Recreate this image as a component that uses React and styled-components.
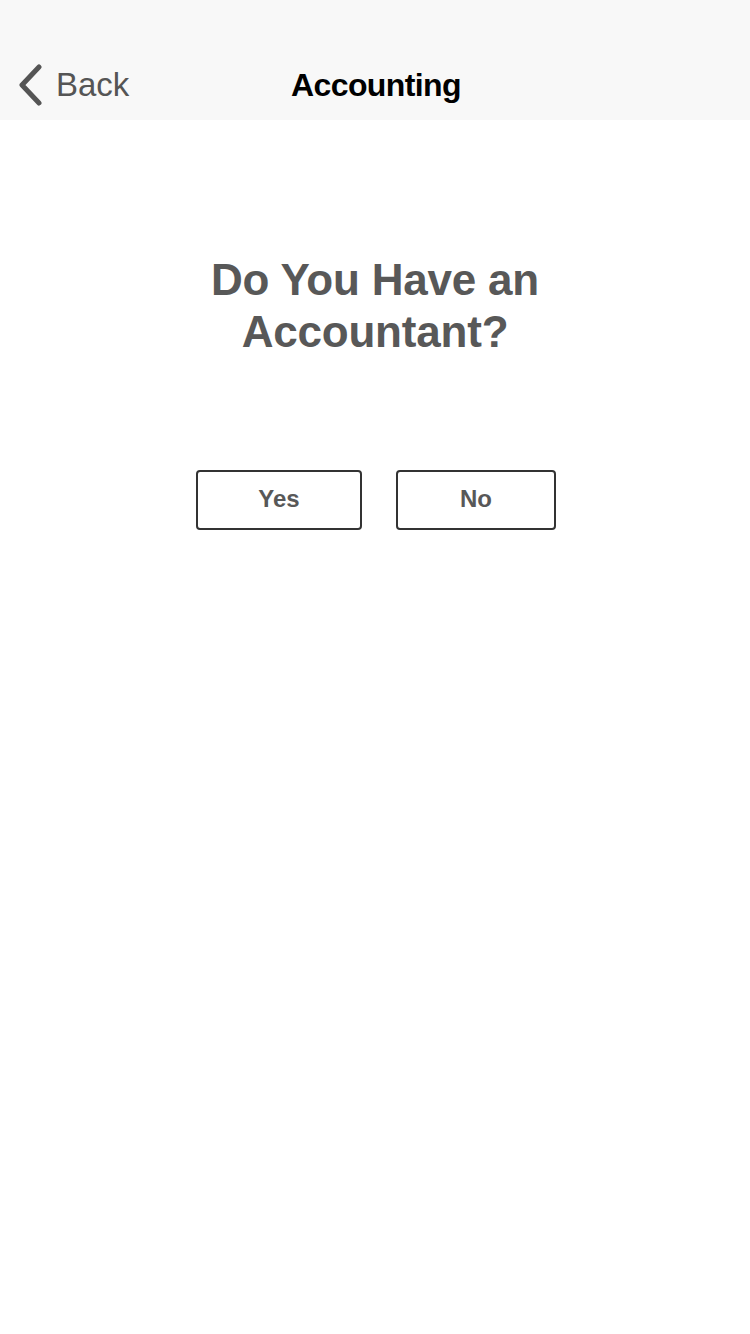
import styled, { createGlobalStyle } from "styled-components";

const GlobalStyle = createGlobalStyle`
    html, body {
        margin: 0;
        padding: 0;
        background: #ffffff;
        font-family: "Liberation Sans", Arial, sans-serif;
    }
`;

export default function App() {
    return (
        <Page>
            <GlobalStyle />
            <Header>
                <BackButton>
                    <svg width="28" height="42" viewBox="0 0 28 42">
                        <polyline points="23,3 6,21 23,39" fill="none" stroke="#555" strokeWidth="5" strokeLinecap="round" strokeLinejoin="round" />
                    </svg>
                    <span>Back</span>
                </BackButton>
                <Title>Accounting</Title>
            </Header>
            <Content>
                <Question>Do You Have an<br />Accountant?</Question>
                <Choices>
                    <Choice $width={166}>Yes</Choice>
                    <Choice $width={160}>No</Choice>
                </Choices>
            </Content>
        </Page>
    );
}

const Page = styled.div`
    width: 750px;
    min-height: 1334px;
    background: #fff;
`;

const Header = styled.div`
    position: relative;
    height: 70px;
    padding-top: 50px;
    background: #f8f8f8;
    display: flex;
    align-items: center;
    justify-content: center;
`;

const BackButton = styled.div`
    position: absolute;
    left: 16px;
    top: 50px;
    height: 70px;
    display: flex;
    align-items: center;
    gap: 12px;
    color: #555;
    font-size: 33px;
`;

const Title = styled.div`
    font-size: 32px;
    font-weight: bold;
    color: #000;
    letter-spacing: -0.6px;
    padding-left: 2px;
`;

const Content = styled.div`
    display: flex;
    flex-direction: column;
    align-items: center;
    padding-top: 134px;
`;

const Question = styled.h1`
    margin: 0;
    font-size: 44px;
    line-height: 52px;
    font-weight: bold;
    color: #585858;
    text-align: center;
    letter-spacing: -0.2px;
`;

const Choices = styled.div`
    display: flex;
    gap: 34px;
    margin-top: 112px;
    padding-left: 2px;
`;

const Choice = styled.button`
    width: ${(p) => p.$width}px;
    height: 60px;
    box-sizing: border-box;
    border: 2px solid #333;
    border-radius: 4px;
    background: #fff;
    font-family: "Liberation Sans", Arial, sans-serif;
    font-size: 24px;
    font-weight: bold;
    color: #585858;
    padding: 0 0 2px;
`;
